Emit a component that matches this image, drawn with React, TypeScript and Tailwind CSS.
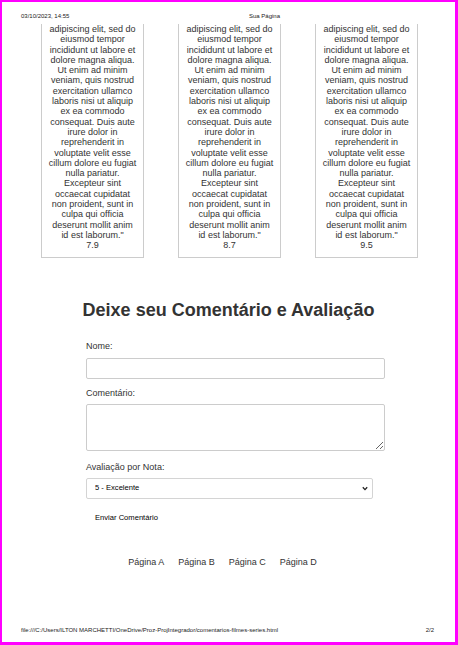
import React from 'react';

const lorem = [
  'adipiscing elit, sed do',
  'eiusmod tempor',
  'incididunt ut labore et',
  'dolore magna aliqua.',
  'Ut enim ad minim',
  'veniam, quis nostrud',
  'exercitation ullamco',
  'laboris nisi ut aliquip',
  'ex ea commodo',
  'consequat. Duis aute',
  'irure dolor in',
  'reprehenderit in',
  'voluptate velit esse',
  'cillum dolore eu fugiat',
  'nulla pariatur.',
  'Excepteur sint',
  'occaecat cupidatat',
  'non proident, sunt in',
  'culpa qui officia',
  'deserunt mollit anim',
  'id est laborum."',
];

const ratings = ['7.9', '8.7', '9.5'];

const Card = ({ rating }: { rating: string }) => (
  <div className="w-[103px] border-x border-b border-[#cccccc] pb-[6px] text-center text-[9px] leading-[10.3px] text-[#333333]">
    {lorem.map((line, i) => (
      <div key={i} className="whitespace-nowrap">{line}</div>
    ))}
    <div>{rating}</div>
  </div>
);

export default function App() {
  return (
    <div className="w-[458px] h-[645px] bg-[#ff00ff] pt-[2px] pl-[2px] pr-[3px] pb-[3px] font-['Liberation_Sans',Arial,sans-serif]">
      <div className="h-full bg-white flex flex-col">
        {/* print header */}
        <div className="flex pt-[11px] pl-[19px] text-[6px] leading-[6px] text-[#222]">
          <span className="w-[228px]">03/10/2023, 14:55</span>
          <span>Sua Página</span>
        </div>

        <div className="flex gap-[34px] ml-[39px] mt-[5px]">
          {ratings.map((r) => (
            <Card key={r} rating={r} />
          ))}
        </div>

        <h2 className="mt-[41px] text-center text-[18px] leading-[22px] font-bold text-[#333333]">
          Deixe seu Comentário e Avaliação
        </h2>

        <form className="ml-[84px] w-[299px] flex flex-col text-[9px] leading-[10px] text-[#333333]">
          <label className="mt-[20px]">Nome:</label>
          <input type="text" className="mt-[7px] h-[21px] border border-[#cccccc] rounded-[2px] bg-white" />
          <label className="mt-[9px]">Comentário:</label>
          <textarea className="mt-[6px] h-[47px] border border-[#cccccc] rounded-[2px] bg-white resize" />
          <label className="mt-[11px]">Avaliação por Nota:</label>
          <div className="relative mt-[6px] w-[287px]">
            <select className="w-full h-[21px] appearance-none border border-[#d4d4d4] rounded-[2px] bg-white pl-[8px] text-[7.6px] text-black">
              <option>5 - Excelente</option>
              <option>4 - Muito Bom</option>
              <option>3 - Bom</option>
              <option>2 - Regular</option>
              <option>1 - Ruim</option>
            </select>
            <svg className="absolute right-[5px] top-[8px]" width="6" height="5" viewBox="0 0 6 5">
              <path d="M0.8 1.2 L3 3.6 L5.2 1.2" fill="none" stroke="#222" strokeWidth="1.3" />
            </svg>
          </div>
          <button type="button" className="self-start mt-[14px] ml-[9px] text-[7.6px] leading-[9px] text-black">
            Enviar Comentário
          </button>
        </form>

        <nav className="mt-[35px] flex justify-center gap-[14px] pr-[12px] text-[9px] leading-[10px] text-[#333333]">
          <a href="#">Página A</a>
          <a href="#">Página B</a>
          <a href="#">Página C</a>
          <a href="#">Página D</a>
        </nav>

        {/* print footer */}
        <div className="mt-auto mb-[9px] flex justify-between pl-[19px] pr-[21px] text-[6px] leading-[6px] text-[#222]">
          <span>file:///C:/Users/ILTON MARCHETTI/OneDrive/Proz-ProjIntegrador/comentarios-filmes-series.html</span>
          <span>2/2</span>
        </div>
      </div>
    </div>
  );
}
